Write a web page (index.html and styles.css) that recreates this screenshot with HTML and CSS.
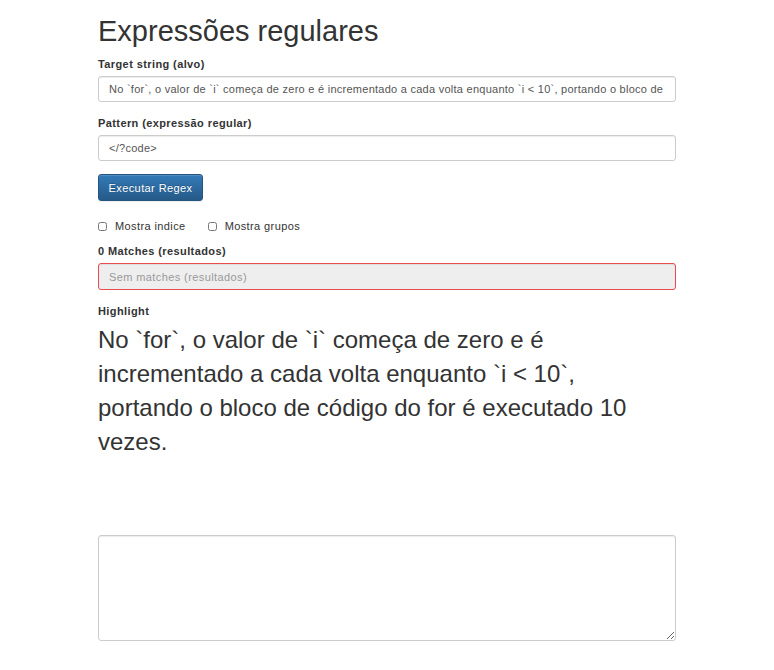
FILE: index.html
```html
<!DOCTYPE html>
<html lang="pt">
<head>
<meta charset="utf-8">
<title>Expressões regulares</title>
<link rel="stylesheet" href="styles.css">
</head>
<body>
<div class="container">
  <h1 class="title">Expressões regulares</h1>
  <div class="form-group">
    <label class="field-label" for="target">Target string (alvo)</label>
    <input class="form-control" id="target" type="text" value="No `for`, o valor de `i` começa de zero e é incrementado a cada volta enquanto `i &lt; 10`, portando o bloco de código do for é executado 10 vezes.">
  </div>
  <div class="form-group">
    <label class="field-label" for="pattern">Pattern (expressão regular)</label>
    <input class="form-control" id="pattern" type="text" value="&lt;/?code&gt;">
  </div>
  <button class="btn-primary" type="button">Executar Regex</button>
  <div class="checks">
    <label class="check"><input type="checkbox"><span>Mostra indice</span></label>
    <label class="check"><input type="checkbox"><span>Mostra grupos</span></label>
  </div>
  <div class="form-group">
    <label class="field-label">0 Matches (resultados)</label>
    <input class="form-control error" type="text" placeholder="Sem matches (resultados)" readonly>
  </div>
  <label class="field-label">Highlight</label>
  <div class="highlight">No `for`, o valor de `i` começa de zero e é incrementado a cada volta enquanto `i &lt; 10`, portando o bloco de código do for é executado 10 vezes.</div>
  <textarea class="form-control area"></textarea>
</div>
</body>
</html>
```
FILE: styles.css
```css
* { box-sizing: border-box; }
body {
  margin: 0;
  font-family: "Liberation Sans", Arial, sans-serif;
  font-size: 11px;
  letter-spacing: 0.4px;
  color: #333;
  background: #fff;
}
.container {
  width: 578px;
  margin: 0 auto;
}
.title {
  font-size: 29px;
  font-weight: 400;
  line-height: 32px;
  letter-spacing: 0;
  margin: 15px 0 9px;
}
.field-label {
  display: block;
  font-weight: 700;
  font-size: 11px;
  line-height: 16px;
  margin-bottom: 4px;
}
.form-group {
  margin-bottom: 13px;
}
.form-control {
  display: block;
  width: 100%;
  height: 26px;
  padding: 0 10px;
  font-family: "Liberation Sans", Arial, sans-serif;
  font-size: 11px;
  letter-spacing: 0.26px;
  color: #555;
  background: #fff;
  border: 1px solid #ccc;
  border-radius: 3px;
  box-shadow: inset 0 1px 1px rgba(0,0,0,.075);
  outline: none;
}
.form-control.error {
  height: 27px;
  background: #eee;
  border-color: #e84c4f;
  letter-spacing: 0.4px;
}
.form-control.error::placeholder { color: #999; }
.btn-primary {
  display: block;
  height: 27px;
  width: 105px;
  padding: 0;
  font-family: "Liberation Sans", Arial, sans-serif;
  font-size: 11px;
  letter-spacing: 0.4px;
  color: #fff;
  background: linear-gradient(to bottom, #337ab7 0, #265a88 100%);
  border: 1px solid #245580;
  border-radius: 3px;
  box-shadow: inset 0 1px 0 rgba(255,255,255,.15), 0 1px 1px rgba(0,0,0,.075);
  text-shadow: 0 -1px 0 rgba(0,0,0,.2);
}
.checks {
  display: flex;
  gap: 22px;
  margin: 17px 0 9px;
  line-height: 16px;
}
.check {
  display: flex;
  align-items: center;
  gap: 8px;
}
.check input {
  margin: 0;
  width: 9px;
  height: 9px;
}
.highlight {
  font-size: 24px;
  line-height: 34px;
  letter-spacing: 0;
  margin-top: 3px;
}
.area {
  height: 106px;
  margin-top: 76px;
  resize: both;
  padding: 6px 10px;
}
```
